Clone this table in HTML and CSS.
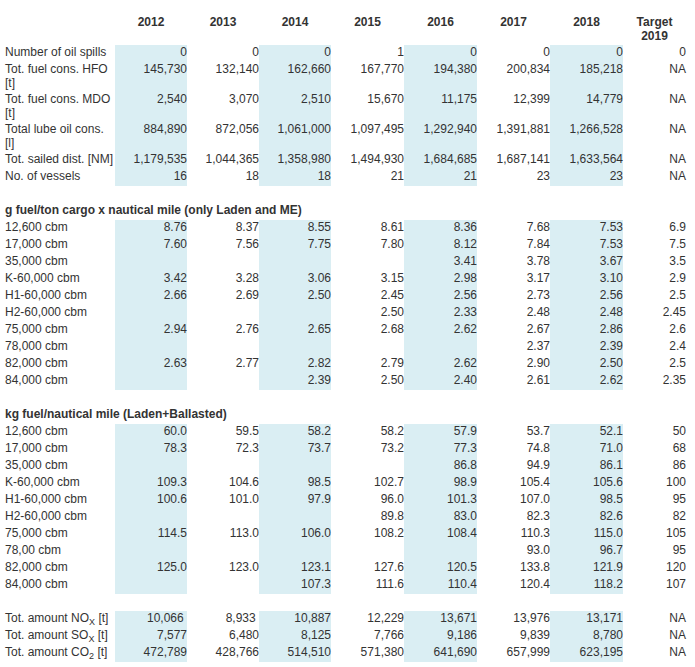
FILE: index.html
```html
<!DOCTYPE html>
<html>
<head>
<meta charset="utf-8">
<link rel="stylesheet" href="styles.css">
</head>
<body>
<table class="kpi">
  <colgroup>
    <col class="c-label"><col class="c-y"><col class="c-y"><col class="c-y"><col class="c-y2"><col class="c-y2"><col class="c-y2"><col class="c-y2"><col class="c-t">
  </colgroup>
  <thead>
    <tr class="head">
      <th></th><th>2012</th><th>2013</th><th>2014</th><th>2015</th><th>2016</th><th>2017</th><th>2018</th><th>Target<br>2019</th>
    </tr>
  </thead>
  <tbody>
    <tr class="d"><td>Number of oil spills</td><td>0</td><td>0</td><td>0</td><td>1</td><td>0</td><td>0</td><td>0</td><td>0</td></tr>
    <tr class="d two"><td>Tot. fuel cons. HFO<br>[t]</td><td>145,730</td><td>132,140</td><td>162,660</td><td>167,770</td><td>194,380</td><td>200,834</td><td>185,218</td><td>NA</td></tr>
    <tr class="d two"><td>Tot. fuel cons. MDO<br>[t]</td><td>2,540</td><td>3,070</td><td>2,510</td><td>15,670</td><td>11,175</td><td>12,399</td><td>14,779</td><td>NA</td></tr>
    <tr class="d two"><td>Total lube oil cons.<br>[l]</td><td>884,890</td><td>872,056</td><td>1,061,000</td><td>1,097,495</td><td>1,292,940</td><td>1,391,881</td><td>1,266,528</td><td>NA</td></tr>
    <tr class="d"><td>Tot. sailed dist. [NM]</td><td>1,179,535</td><td>1,044,365</td><td>1,358,980</td><td>1,494,930</td><td>1,684,685</td><td>1,687,141</td><td>1,633,564</td><td>NA</td></tr>
    <tr class="d"><td>No. of vessels</td><td>16</td><td>18</td><td>18</td><td>21</td><td>21</td><td>23</td><td>23</td><td>NA</td></tr>

    <tr class="gap"><td colspan="9"></td></tr>
    <tr class="sec"><td colspan="9">g fuel/ton cargo x nautical mile (only Laden and ME)</td></tr>
    <tr class="d"><td>12,600 cbm</td><td>8.76</td><td>8.37</td><td>8.55</td><td>8.61</td><td>8.36</td><td>7.68</td><td>7.53</td><td>6.9</td></tr>
    <tr class="d"><td>17,000 cbm</td><td>7.60</td><td>7.56</td><td>7.75</td><td>7.80</td><td>8.12</td><td>7.84</td><td>7.53</td><td>7.5</td></tr>
    <tr class="d"><td>35,000 cbm</td><td></td><td></td><td></td><td></td><td>3.41</td><td>3.78</td><td>3.67</td><td>3.5</td></tr>
    <tr class="d"><td>K-60,000 cbm</td><td>3.42</td><td>3.28</td><td>3.06</td><td>3.15</td><td>2.98</td><td>3.17</td><td>3.10</td><td>2.9</td></tr>
    <tr class="d"><td>H1-60,000 cbm</td><td>2.66</td><td>2.69</td><td>2.50</td><td>2.45</td><td>2.56</td><td>2.73</td><td>2.56</td><td>2.5</td></tr>
    <tr class="d"><td>H2-60,000 cbm</td><td></td><td></td><td></td><td>2.50</td><td>2.33</td><td>2.48</td><td>2.48</td><td>2.45</td></tr>
    <tr class="d"><td>75,000 cbm</td><td>2.94</td><td>2.76</td><td>2.65</td><td>2.68</td><td>2.62</td><td>2.67</td><td>2.86</td><td>2.6</td></tr>
    <tr class="d"><td>78,000 cbm</td><td></td><td></td><td></td><td></td><td></td><td>2.37</td><td>2.39</td><td>2.4</td></tr>
    <tr class="d"><td>82,000 cbm</td><td>2.63</td><td>2.77</td><td>2.82</td><td>2.79</td><td>2.62</td><td>2.90</td><td>2.50</td><td>2.5</td></tr>
    <tr class="d"><td>84,000 cbm</td><td></td><td></td><td>2.39</td><td>2.50</td><td>2.40</td><td>2.61</td><td>2.62</td><td>2.35</td></tr>

    <tr class="gap"><td colspan="9"></td></tr>
    <tr class="sec"><td colspan="9">kg fuel/nautical mile (Laden+Ballasted)</td></tr>
    <tr class="d"><td>12,600 cbm</td><td>60.0</td><td>59.5</td><td>58.2</td><td>58.2</td><td>57.9</td><td>53.7</td><td>52.1</td><td>50</td></tr>
    <tr class="d"><td>17,000 cbm</td><td>78.3</td><td>72.3</td><td>73.7</td><td>73.2</td><td>77.3</td><td>74.8</td><td>71.0</td><td>68</td></tr>
    <tr class="d"><td>35,000 cbm</td><td></td><td></td><td></td><td></td><td>86.8</td><td>94.9</td><td>86.1</td><td>86</td></tr>
    <tr class="d"><td>K-60,000 cbm</td><td>109.3</td><td>104.6</td><td>98.5</td><td>102.7</td><td>98.9</td><td>105.4</td><td>105.6</td><td>100</td></tr>
    <tr class="d"><td>H1-60,000 cbm</td><td>100.6</td><td>101.0</td><td>97.9</td><td>96.0</td><td>101.3</td><td>107.0</td><td>98.5</td><td>95</td></tr>
    <tr class="d"><td>H2-60,000 cbm</td><td></td><td></td><td></td><td>89.8</td><td>83.0</td><td>82.3</td><td>82.6</td><td>82</td></tr>
    <tr class="d"><td>75,000 cbm</td><td>114.5</td><td>113.0</td><td>106.0</td><td>108.2</td><td>108.4</td><td>110.3</td><td>115.0</td><td>105</td></tr>
    <tr class="d"><td>78,00 cbm</td><td></td><td></td><td></td><td></td><td></td><td>93.0</td><td>96.7</td><td>95</td></tr>
    <tr class="d"><td>82,000 cbm</td><td>125.0</td><td>123.0</td><td>123.1</td><td>127.6</td><td>120.5</td><td>133.8</td><td>121.9</td><td>120</td></tr>
    <tr class="d"><td>84,000 cbm</td><td></td><td></td><td>107.3</td><td>111.6</td><td>110.4</td><td>120.4</td><td>118.2</td><td>107</td></tr>

    <tr class="gap"><td colspan="9"></td></tr>
    <tr class="d"><td>Tot. amount NO<sub>X</sub> [t]</td><td>10,066&nbsp;</td><td>8,933&nbsp;</td><td>10,887</td><td>12,229</td><td>13,671</td><td>13,976</td><td>13,171</td><td>NA</td></tr>
    <tr class="d"><td>Tot. amount SO<sub>X</sub> [t]</td><td>7,577</td><td>6,480</td><td>8,125</td><td>7,766</td><td>9,186</td><td>9,839</td><td>8,780</td><td>NA</td></tr>
    <tr class="d"><td>Tot. amount CO<sub>2</sub> [t]</td><td>472,789</td><td>428,766</td><td>514,510</td><td>571,380</td><td>641,690</td><td>657,999</td><td>623,195</td><td>NA</td></tr>
  </tbody>
</table>
</body>
</html>
```
FILE: styles.css
```css
html, body {
  margin: 0;
  padding: 0;
  background: #ffffff;
}

body {
  font-family: "Liberation Sans", Arial, sans-serif;
  font-size: 12px;
  color: #333333;
}

.kpi {
  border-collapse: collapse;
  border-spacing: 0;
  table-layout: fixed;
  width: 686px;
  margin-top: 15px;
}

.c-label { width: 115px; }
.c-y { width: 72px; }
.c-y2 { width: 73px; }
.c-t { width: 63px; }

.kpi th,
.kpi td {
  padding: 0;
  line-height: 14px;
  vertical-align: top;
  text-align: right;
  white-space: nowrap;
}

.kpi th {
  font-weight: bold;
  text-align: center;
  height: 30px;
}

.kpi td {
  height: 17px;
}

.kpi td:first-child {
  text-align: left;
  padding-left: 5px;
}

.kpi tr.two td {
  height: 30px;
}

.kpi tr.d td:nth-child(2),
.kpi tr.d td:nth-child(4),
.kpi tr.d td:nth-child(6),
.kpi tr.d td:nth-child(8) {
  background: #daeef3;
}

.kpi tr.sec td {
  font-weight: bold;
  text-align: left;
}

.kpi sub {
  font-size: 9px;
  line-height: 0;
  vertical-align: -3px;
}
```
